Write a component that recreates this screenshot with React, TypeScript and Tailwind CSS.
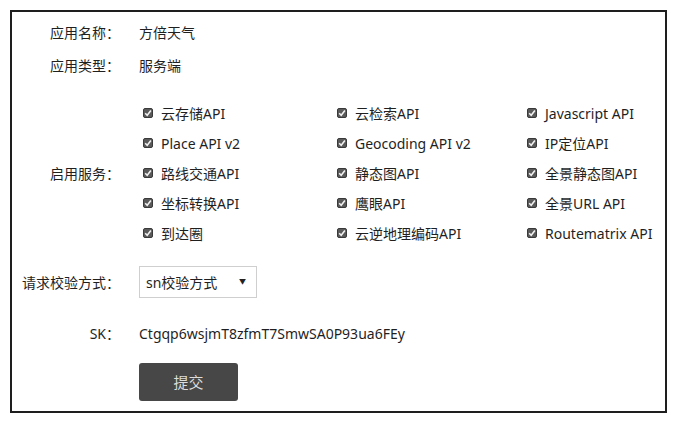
import React from "react";

const services: string[][] = [
  ["云存储API", "云检索API", "Javascript API"],
  ["Place API v2", "Geocoding API v2", "IP定位API"],
  ["路线交通API", "静态图API", "全景静态图API"],
  ["坐标转换API", "鹰眼API", "全景URL API"],
  ["到达圈", "云逆地理编码API", "Routematrix API"],
];

function Check() {
  return (
    <span className="inline-flex items-center justify-center w-[10px] h-[10px] rounded-[2px] bg-[#5a5a5a] border border-[#3a3a3a] mr-[8px] shrink-0">
      <svg width="8" height="8" viewBox="0 0 8 8">
        <path d="M1.2 4.2 L3.2 6.2 L6.9 1.6" stroke="#f2f2f2" strokeWidth="1.6" fill="none" />
      </svg>
    </span>
  );
}

function Label({ children }: { children: React.ReactNode }) {
  return <div className="w-[108px] text-right shrink-0">{children}</div>;
}

export default function App() {
  return (
    <div
      className="w-[680px] h-[424px] bg-white pt-[10px] pl-[10px]"
      style={{ fontFamily: '"Noto Sans", "Noto Sans CJK SC", sans-serif' }}
    >
      <div className="w-[657px] h-[403px] border-2 border-[#1e1e1e] text-[14px] text-[#1f1f1f] flex flex-col pt-[4px]">
        <div className="flex items-center h-[33px]">
          <Label>应用名称：</Label>
          <div className="ml-[19px]">方倍天气</div>
        </div>
        <div className="flex items-center h-[33px]">
          <Label>应用类型：</Label>
          <div className="ml-[19px]">服务端</div>
        </div>
        <div className="flex items-center mt-[16px]">
          <Label>启用服务：</Label>
          <div className="ml-[23px] grid grid-cols-[194px_190px_1fr]">
            {services.flat().map((s) => (
              <div key={s} className="flex items-center h-[30px] whitespace-nowrap">
                <Check />
                <span>{s}</span>
              </div>
            ))}
          </div>
        </div>
        <div className="flex items-center mt-[18px] h-[32px]">
          <Label>请求校验方式：</Label>
          <div className="ml-[19px] w-[118px] h-[32px] border border-[#cfcfcf] bg-white flex items-center justify-between pl-[6px] pr-[10px]">
            <span>sn校验方式</span>
            <span className="text-[7px] text-[#222]">▼</span>
          </div>
        </div>
        <div className="flex items-center mt-[19px] h-[32px]">
          <Label>SK：</Label>
          <div className="ml-[19px]">Ctgqp6wsjmT8zfmT7SmwSA0P93ua6FEy</div>
        </div>
        <div className="flex mt-[14px]">
          <div className="w-[108px] shrink-0" />
          <button className="ml-[19px] w-[99px] h-[38px] bg-[#474747] rounded-[3px] text-[#dcdcdc] text-[15px]">
            提交
          </button>
        </div>
      </div>
    </div>
  );
}
